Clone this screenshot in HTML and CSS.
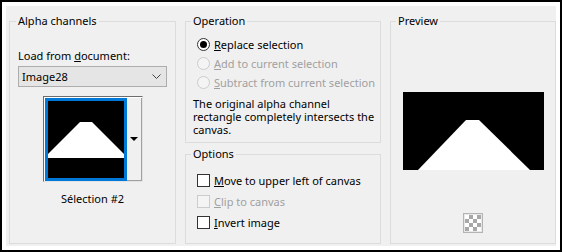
FILE: index.html
```html
<!DOCTYPE html>
<html lang="en">
<head>
    <meta charset="UTF-8">
    <title>Alpha channels</title>
    <link rel="stylesheet" href="styles.css">
</head>
<body>
    <div class="dialog">
        <div class="frame">
            <fieldset class="group alpha">
                <legend>Alpha channels</legend>
                <div class="field-label">Load from <u>d</u>ocument:</div>
                <div class="select">
                    <span>Image28</span>
                    <svg class="chevron" width="9" height="5" viewBox="0 0 9 5">
                        <polyline points="0.5,0.5 4.5,4.5 8.5,0.5" fill="none" stroke="#404040" stroke-width="1"/>
                    </svg>
                </div>
                <div class="thumb">
                    <div class="thumb-img">
                        <svg width="76" height="77" viewBox="0 0 76 77">
                            <rect width="76" height="77" fill="#000"/>
                            <polygon points="32,21 44,21 76,53 76,57 0,57 0,53" fill="#fff"/>
                        </svg>
                    </div>
                    <div class="thumb-arrow"><span class="tri"></span></div>
                </div>
                <div class="thumb-caption">Sélection #2</div>
            </fieldset>

            <div class="middle">
                <fieldset class="group operation">
                    <legend>Operation</legend>
                    <div class="choice">
                        <span class="radio checked"></span>
                        <span><u>R</u>eplace selection</span>
                    </div>
                    <div class="choice disabled">
                        <span class="radio"></span>
                        <span><u>A</u>dd to current selection</span>
                    </div>
                    <div class="choice disabled">
                        <span class="radio"></span>
                        <span><u>S</u>ubtract from current selection</span>
                    </div>
                    <p class="note">The original alpha channel<br>rectangle completely intersects the<br>canvas.</p>
                </fieldset>

                <fieldset class="group options">
                    <legend>Options</legend>
                    <div class="check">
                        <span class="box"></span>
                        <span><u>M</u>ove to upper left of canvas</span>
                    </div>
                    <div class="check disabled">
                        <span class="box"></span>
                        <span><u>C</u>lip to canvas</span>
                    </div>
                    <div class="check">
                        <span class="box"></span>
                        <span><u>I</u>nvert image</span>
                    </div>
                </fieldset>
            </div>

            <fieldset class="group preview">
                <legend>Preview</legend>
                <svg class="preview-img" width="141" height="78" viewBox="0 0 141 78">
                    <rect width="141" height="78" fill="#000"/>
                    <polygon points="63,28 76,28 127,78 15,78" fill="#fff"/>
                </svg>
                <div class="bg-toggle"><span class="checker"></span></div>
            </fieldset>
        </div>
    </div>
</body>
</html>
```

FILE: styles.css
```css
* {
    margin: 0;
    padding: 0;
    box-sizing: border-box;
}

body {
    font-family: 'Noto Sans', 'Open Sans', sans-serif;
    font-size: 11px;
    color: #000;
    background: #f0f0f0;
}

.dialog {
    width: 562px;
    height: 252px;
    border: 2px solid #000;
    background: #fff;
}

.frame {
    height: 100%;
    border: 4px solid #fff;
    background: #f0f0f0;
    padding: 7px 0 2px 3px;
    display: grid;
    grid-template-columns: 167px 196px 166px;
    column-gap: 9px;
}

.group {
    border: 1px solid #dcdcdc;
    min-width: 0;
    margin: 0;
}

.group legend {
    line-height: 16px;
    padding: 0 2px;
    margin-left: -2px;
}

/* alpha channels */

.alpha {
    height: 231px;
    padding: 0 8px;
}

.field-label {
    margin-top: 19px;
    line-height: 16px;
}

.select {
    margin-top: 2px;
    height: 21px;
    border: 1px solid #adadad;
    background: #e5e5e5;
    display: flex;
    align-items: center;
    justify-content: space-between;
    padding: 0 5px 0 3px;
}

.thumb {
    width: 100px;
    height: 86px;
    margin: 9px auto 0;
    display: flex;
    border: 1px solid;
    border-color: #6d6d6d #e3e3e3 #e3e3e3 #6d6d6d;
    background: #fff;
    padding: 1px 0 0 1px;
}

.thumb-img {
    width: 82px;
    height: 83px;
    border: 3px solid #0078d7;
}

.thumb-img svg {
    display: block;
}

.thumb-arrow {
    width: 15px;
    height: 83px;
    background: #f0f0f0;
    border-right: 1px solid #a0a0a0;
    border-bottom: 1px solid #a0a0a0;
    display: flex;
    align-items: center;
    justify-content: center;
}

.tri {
    width: 0;
    height: 0;
    border-left: 4px solid transparent;
    border-right: 4px solid transparent;
    border-top: 4px solid #000;
}

.thumb-caption {
    margin-top: 9px;
    line-height: 16px;
    text-align: center;
}

/* operation + options */

.middle {
    display: flex;
    flex-direction: column;
    gap: 3px;
}

.operation {
    height: 130px;
    padding: 0 7px;
}

.choice {
    height: 19px;
    display: flex;
    align-items: center;
    white-space: nowrap;
}

.operation legend + .choice {
    margin-top: 6px;
}

.radio {
    flex: none;
    width: 13px;
    height: 13px;
    border: 1px solid #333;
    border-radius: 50%;
    background: #fff;
    margin: 0 4px;
    display: flex;
    align-items: center;
    justify-content: center;
}

.radio.checked::after {
    content: "";
    width: 7px;
    height: 7px;
    border-radius: 50%;
    background: #000;
}

.disabled {
    color: #a0a0a0;
}

.disabled .radio,
.disabled .box {
    border-color: #cccccc;
    background: #f4f4f4;
}

.note {
    margin-top: 5px;
    line-height: 13px;
    white-space: nowrap;
}

.options {
    height: 98px;
    padding: 0 7px;
}

.check {
    height: 21px;
    display: flex;
    align-items: center;
    white-space: nowrap;
}

.options legend + .check {
    margin-top: 8px;
}

.box {
    flex: none;
    width: 13px;
    height: 13px;
    border: 1px solid #333;
    background: #fff;
    margin: 0 4px;
}

/* preview */

.preview {
    height: 231px;
    padding: 0 7px;
}

.preview-img {
    display: block;
    margin: 63px auto 0;
}

.bg-toggle {
    width: 20px;
    height: 20px;
    margin: 43px auto 0;
    border: 1px solid #b4b4b4;
    padding: 1px;
    background: #e8e8e8;
}

.checker {
    display: block;
    width: 16px;
    height: 16px;
    background-color: #fff;
    background-image: conic-gradient(#a8a8a8 25%, #fff 0 50%, #a8a8a8 0 75%, #fff 0);
    background-size: 8px 8px;
}
```
